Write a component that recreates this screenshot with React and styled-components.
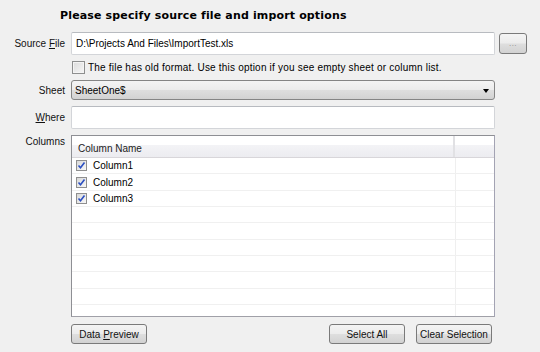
import styled, { createGlobalStyle } from "styled-components";

const GlobalStyle = createGlobalStyle`
  html, body {
    margin: 0;
    padding: 0;
    background: #f0f0f0;
  }
  body {
    width: 540px;
    height: 352px;
    overflow: hidden;
    font-family: "Liberation Sans", Arial, sans-serif;
    font-size: 10px;
    color: #000;
  }
`;

const columns = ["Column1", "Column2", "Column3"];
const ROW_COUNT = 10;

const CheckMark = () => (
  <svg width="9" height="9" viewBox="0 0 9 9">
    <path
      d="M1.5 4.5 L3.5 6.8 L7.5 1.5"
      fill="none"
      stroke="#2b4fc2"
      strokeWidth="1.6"
    />
  </svg>
);

const App = () => {
  const rows = [];
  for (let i = 0; i < ROW_COUNT; i++) {
    const name = columns[i];
    rows.push(
      <GridRow key={i}>
        <NameCell>
          {name && (
            <>
              <SmallCheck>
                <CheckMark />
              </SmallCheck>
              <span>{name}</span>
            </>
          )}
        </NameCell>
        <FillCell />
      </GridRow>
    );
  }

  return (
    <>
      <GlobalStyle />
      <Page>
        <Title>Please specify source file and import options</Title>
        <Form>
          <Label>
            Source <u>F</u>ile
          </Label>
          <FieldRow>
            <TextInput>D:\Projects And Files\ImportTest.xls</TextInput>
            <BrowseButton>...</BrowseButton>
          </FieldRow>

          <span />
          <CheckRow>
            <BigCheck />
            <span>
              The file has old format. Use this option if you see empty sheet
              or column list.
            </span>
          </CheckRow>

          <Label>Sheet</Label>
          <Select>
            <span>SheetOne$</span>
            <Arrow />
          </Select>

          <Label>
            <u>W</u>here
          </Label>
          <TextInput />

          <Label $top>Columns</Label>
          <Grid>
            <GridHeader>
              <HeaderCell>Column Name</HeaderCell>
              <HeaderFill />
            </GridHeader>
            {rows}
          </Grid>

          <span />
          <ButtonBar>
            <Button $w={76}>
              <span>
                Data <u>P</u>review
              </span>
            </Button>
            <RightButtons>
              <Button $w={76}>Select All</Button>
              <Button $w={76}>Clear Selection</Button>
            </RightButtons>
          </ButtonBar>
        </Form>
      </Page>
    </>
  );
};

export default App;

const Page = styled.div`
  padding-top: 9px;
`;

const Title = styled.div`
  padding-left: 60px;
  height: 14px;
  line-height: 14px;
  font-family: "DejaVu Sans", Verdana, sans-serif;
  font-weight: bold;
  font-size: 11px;
  letter-spacing: 0.15px;
  margin-bottom: 9px;
`;

const Form = styled.div`
  display: grid;
  grid-template-columns: 65px 460px;
  column-gap: 6px;
  row-gap: 6px;
`;

const Label = styled.div`
  text-align: right;
  color: #111;
  align-self: ${(p) => (p.$top ? "start" : "center")};
  padding-top: ${(p) => (p.$top ? "1px" : "0")};
  white-space: nowrap;
`;

const FieldRow = styled.div`
  display: flex;
  align-items: center;
  gap: 4px;
`;

const TextInput = styled.div`
  box-sizing: border-box;
  width: 424px;
  height: 23px;
  display: flex;
  align-items: center;
  padding-left: 4px;
  background: #fff;
  border: 1px solid #d3d5d9;
  border-top-color: #b8bbc0;
  border-radius: 2px;
`;

const buttonFace = `
  box-sizing: border-box;
  border: 1px solid #7a7a7a;
  border-radius: 3px;
  background: linear-gradient(
    to bottom,
    #f4f4f4 0%,
    #ececec 48%,
    #dedede 52%,
    #d2d2d2 100%
  );
`;

const BrowseButton = styled.div`
  ${buttonFace}
  width: 28px;
  height: 21px;
  display: flex;
  align-items: center;
  justify-content: center;
  color: #8a8a8a;
  font-size: 8px;
  letter-spacing: 0.5px;
`;

const CheckRow = styled.div`
  display: flex;
  align-items: center;
  gap: 3px;
  height: 13px;
  padding-left: 1px;
  white-space: nowrap;
  letter-spacing: 0.2px;
`;

const BigCheck = styled.span`
  box-sizing: border-box;
  width: 13px;
  height: 13px;
  border: 1px solid #8e8f8f;
  background: linear-gradient(135deg, #dcdcdc 0%, #f6f6f6 100%);
  box-shadow: inset 0 0 0 1px #f4f4f4;
`;

const Select = styled.div`
  ${buttonFace}
  position: relative;
  width: 424px;
  height: 20px;
  display: flex;
  align-items: center;
  padding-left: 3px;
  border-color: #858585;
`;

const Arrow = styled.span`
  position: absolute;
  right: 5px;
  top: 8px;
  width: 0;
  height: 0;
  border-left: 3.5px solid transparent;
  border-right: 3.5px solid transparent;
  border-top: 4px solid #000;
`;

const Grid = styled.div`
  box-sizing: border-box;
  width: 424px;
  height: 182px;
  overflow: hidden;
  background: #fff;
  border: 1px solid #8e8f94;
  border-right-color: #a3a3b3;
  border-bottom-color: #a0a0a8;
`;

const GridHeader = styled.div`
  display: flex;
  height: 21px;
  border-bottom: 1px solid #d8d6da;
  background: linear-gradient(
    to bottom,
    #ffffff 0%,
    #ffffff 43%,
    #f3f3f6 45%,
    #ececf0 100%
  );
`;

const HeaderCell = styled.div`
  box-sizing: border-box;
  width: 383px;
  padding: 3px 0 0 6px;
  display: flex;
  align-items: center;
  color: #222;
  border-right: 2px solid #e1e1e4;
`;

const HeaderFill = styled.div`
  flex: 1;
`;

const GridRow = styled.div`
  box-sizing: border-box;
  display: flex;
  height: 16.35px;
  border-bottom: 1px solid #f0f0f0;
`;

const NameCell = styled.div`
  box-sizing: border-box;
  width: 384px;
  display: flex;
  align-items: center;
  gap: 6px;
  padding-left: 4px;
  border-right: 1px solid #efefef;
`;

const FillCell = styled.div`
  flex: 1;
`;

const SmallCheck = styled.span`
  box-sizing: border-box;
  width: 11px;
  height: 11px;
  display: flex;
  align-items: center;
  justify-content: center;
  border: 1px solid #8f8f8f;
  background: linear-gradient(135deg, #d8d8d8 0%, #f8f8f8 100%);
`;

const ButtonBar = styled.div`
  width: 421px;
  display: flex;
  justify-content: space-between;
  margin-top: 1px;
`;

const RightButtons = styled.div`
  display: flex;
  gap: 11px;
`;

const Button = styled.div`
  ${buttonFace}
  width: ${(p) => p.$w}px;
  height: 20px;
  display: flex;
  align-items: center;
  justify-content: center;
  color: #111;
  white-space: nowrap;
`;
